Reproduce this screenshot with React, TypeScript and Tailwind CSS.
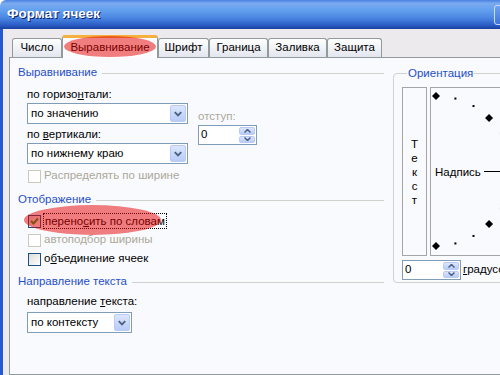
import React from 'react';

const tabs = [
  { label: 'Число', w: 'w-[50px]' },
  { label: 'Выравнивание', w: 'w-[96px]', active: true },
  { label: 'Шрифт', w: 'w-[51px]' },
  { label: 'Граница', w: 'w-[59px]' },
  { label: 'Заливка', w: 'w-[59px]' },
  { label: 'Защита', w: 'w-[55px]' },
];

function Chevron() {
  return (
    <svg width="15" height="19" viewBox="0 0 15 19">
      <path d="M4 8 L7.5 11.5 L11 8" fill="none" stroke="#4D6185" strokeWidth="2" />
    </svg>
  );
}

function Combo({ value, w }: { value: string; w: string }) {
  return (
    <div className={`${w} h-[21px] flex border border-[#7F9DB9] bg-white`}>
      <div className="flex-1 flex items-center pl-[3px]">{value}</div>
      <div className="w-[16px] m-px flex items-center justify-center rounded-[2px] border border-[#B9CBF5] bg-[linear-gradient(to_bottom,#DCE6FC,#B8CCF8)]">
        <Chevron />
      </div>
    </div>
  );
}

function Spin({ w }: { w: string }) {
  return (
    <div className={`${w} h-[20px] flex border border-[#7F9DB9] bg-white`}>
      <div className="flex-1 flex items-center pl-[2px]">0</div>
      <div className="w-[16px] m-px flex flex-col gap-px">
        <div className="flex-1 flex items-center justify-center rounded-[2px] border border-[#B9CBF5] bg-[linear-gradient(to_bottom,#DCE6FC,#B8CCF8)]">
          <svg width="7" height="4" viewBox="0 0 7 4"><path d="M0.5 3.5 L3.5 0.5 L6.5 3.5" fill="none" stroke="#4D6185" strokeWidth="1.5" /></svg>
        </div>
        <div className="flex-1 flex items-center justify-center rounded-[2px] border border-[#B9CBF5] bg-[linear-gradient(to_bottom,#DCE6FC,#B8CCF8)]">
          <svg width="7" height="4" viewBox="0 0 7 4"><path d="M0.5 0.5 L3.5 3.5 L6.5 0.5" fill="none" stroke="#4D6185" strokeWidth="1.5" /></svg>
        </div>
      </div>
    </div>
  );
}

function Check({ checked, disabled }: { checked?: boolean; disabled?: boolean }) {
  return (
    <div
      className={
        disabled
          ? 'w-[13px] h-[13px] border border-[#CAC8BB] bg-white'
          : 'w-[13px] h-[13px] border border-[#1C5180] bg-[linear-gradient(135deg,#DCDCD7,#FFFFFF)] flex items-center justify-center'
      }
    >
      {checked && (
        <svg width="9" height="9" viewBox="0 0 9 9">
          <path d="M1 4 L3.5 6.5 L8 1.5" fill="none" stroke="#21A121" strokeWidth="2" />
        </svg>
      )}
    </div>
  );
}

function Heading({ text }: { text: string }) {
  return (
    <div className="h-[14px] flex items-center pr-[9px]">
      <span className="text-[#1F4FC6]">{text}</span>
      <div className="flex-1 h-px ml-[5px] bg-[#D0D0CC]" />
    </div>
  );
}

function Dial() {
  const pts = [];
  for (let i = 0; i <= 12; i++) {
    const a = ((90 - i * 15) * Math.PI) / 180;
    const x = 5 + 75 * Math.cos(a);
    const y = 83 - 75 * Math.sin(a);
    pts.push(
      i % 3 === 0 ? (
        <polygon key={i} points={`${x},${y - 4} ${x + 4},${y} ${x},${y + 4} ${x - 4},${y}`} fill="#000" />
      ) : (
        <rect key={i} x={x - 1} y={y - 1} width="2" height="2" fill="#000" />
      )
    );
  }
  return (
    <svg className="absolute left-0 top-0" width="160" height="167">
      {pts}
    </svg>
  );
}

export default function App() {
  return (
    <div className="relative w-[500px] h-[375px] overflow-hidden bg-white flex flex-col text-[11.5px] text-black font-['Liberation_Sans',Arial,sans-serif]">
      <div className="h-[29px] shrink-0 flex items-center rounded-tl-[6px] bg-[linear-gradient(to_bottom,#4A82E2_0%,#7BAAF0_12%,#62A0EE_35%,#4B86E2_62%,#2C5FC8_85%,#1B3FA2_100%)]">
        <span className="ml-[7px] text-white font-bold text-[13.5px] [text-shadow:1px_1px_#0A1E6E]">Формат ячеек</span>
        <div className="ml-auto mr-[-20px] w-[26px] h-[20px] rounded-[3px] border border-[#C8D8F8] bg-[linear-gradient(to_bottom,#6FA2F0,#3F74DA)]" />
      </div>
      <div className="flex-1 flex border-l-[3px] border-[#2459D1] bg-[#ECEAEC]">
        <div className="flex-1 flex flex-col pl-[6px] pt-[6px]">
          <div className="h-[22px] flex items-end pl-[3px]">
            {tabs.map((t) =>
              t.active ? (
                <div
                  key={t.label}
                  className={`${t.w} h-[23px] mb-[-1px] relative z-10 flex items-center justify-center rounded-t-[3px] border-x border-t-[3px] border-x-[#919B9C] border-t-[#F5B040] bg-[#FCFCFE]`}
                >
                  {t.label}
                </div>
              ) : (
                <div
                  key={t.label}
                  className={`${t.w} h-[19px] flex items-center justify-center rounded-t-[3px] border border-b-0 border-[#919B9C] bg-[linear-gradient(to_bottom,#FEFEFE,#E3E6EE)]`}
                >
                  {t.label}
                </div>
              )
            )}
          </div>
          <div className="w-[560px] flex-1 border border-[#919B9C] bg-[#F9FAFE] flex pl-[8px] pt-[8px]">
            <div className="w-[375px] flex flex-col">
              <Heading text="Выравнивание" />
              <div className="flex pl-[9px]">
                <div className="flex flex-col">
                  <div className="h-[14px] mt-[8px] flex items-center">
                    <span>по горизо<u>н</u>тали:</span>
                  </div>
                  <div className="mt-px">
                    <Combo value="по значению" w="w-[161px]" />
                  </div>
                  <div className="h-[14px] mt-[4px] flex items-center">
                    <span>по <u>в</u>ертикали:</span>
                  </div>
                  <div className="mt-px">
                    <Combo value="по нижнему краю" w="w-[161px]" />
                  </div>
                </div>
                <div className="ml-[10px] flex flex-col pt-[30px]">
                  <div className="h-[14px] flex items-center text-[#ACA899]">отступ:</div>
                  <div className="mt-px">
                    <Spin w="w-[59px]" />
                  </div>
                </div>
              </div>
              <div className="h-[14px] mt-[5px] pl-[10px] flex items-center gap-[3px] text-[#ACA899]">
                <Check disabled />
                <span>Распределять по ширине</span>
              </div>
              <div className="mt-[10px]">
                <Heading text="Отображение" />
              </div>
              <div className="h-[14px] mt-[7px] pl-[10px] flex items-center gap-[2px]">
                <Check checked />
                <span className="border border-dotted border-black px-px leading-[14px]">перено<u>с</u>ить по словам</span>
              </div>
              <div className="h-[14px] mt-[5px] pl-[10px] flex items-center gap-[3px] text-[#ACA899]">
                <Check disabled />
                <span>автоподбор ширины</span>
              </div>
              <div className="h-[14px] mt-[5px] pl-[10px] flex items-center gap-[3px]">
                <Check />
                <span>о<u>б</u>ъединение ячеек</span>
              </div>
              <div className="mt-[9px]">
                <Heading text="Направление текста" />
              </div>
              <div className="h-[14px] mt-[6px] pl-[9px] flex items-center">
                <span>направление <u>т</u>екста:</span>
              </div>
              <div className="mt-[3px] pl-[9px]">
                <Combo value="по контексту" w="w-[105px]" />
              </div>
            </div>
            <fieldset className="w-[170px] h-[217px] rounded-[4px] border border-[#D0D0CC] pl-[8px] pt-[7px]">
              <legend className="ml-[5px] px-px h-[14px] leading-[14px] text-[#1F4FC6]">Ориентация</legend>
              <div className="flex gap-[3px]">
                <div className="w-[25px] h-[169px] border border-[#A5A5A5] flex flex-col items-center justify-center">
                  {['Т', 'е', 'к', 'с', 'т'].map((c, i) => (
                    <span key={i} className="h-[14px] leading-[14px]">{c}</span>
                  ))}
                </div>
                <div className="w-[120px] h-[169px] border border-[#A5A5A5] relative flex items-center pl-[4px]">
                  <Dial />
                  <span className="mt-[3px]">Надпись</span>
                  <div className="ml-[3px] w-[60px] h-px bg-black" />
                </div>
              </div>
              <div className="mt-[4px] flex items-center gap-[2px]">
                <Spin w="w-[59px]" />
                <span><u>г</u>радусов</span>
              </div>
            </fieldset>
          </div>
        </div>
      </div>
      <div className="absolute z-20 left-[64px] top-[36px] w-[92px] h-[21px] rounded-[50%] bg-[#E6000080]" />
      <div className="absolute z-20 left-[24px] top-[205px] w-[137px] h-[30px] rounded-[50%] bg-[#E6000080]" />
    </div>
  );
}
